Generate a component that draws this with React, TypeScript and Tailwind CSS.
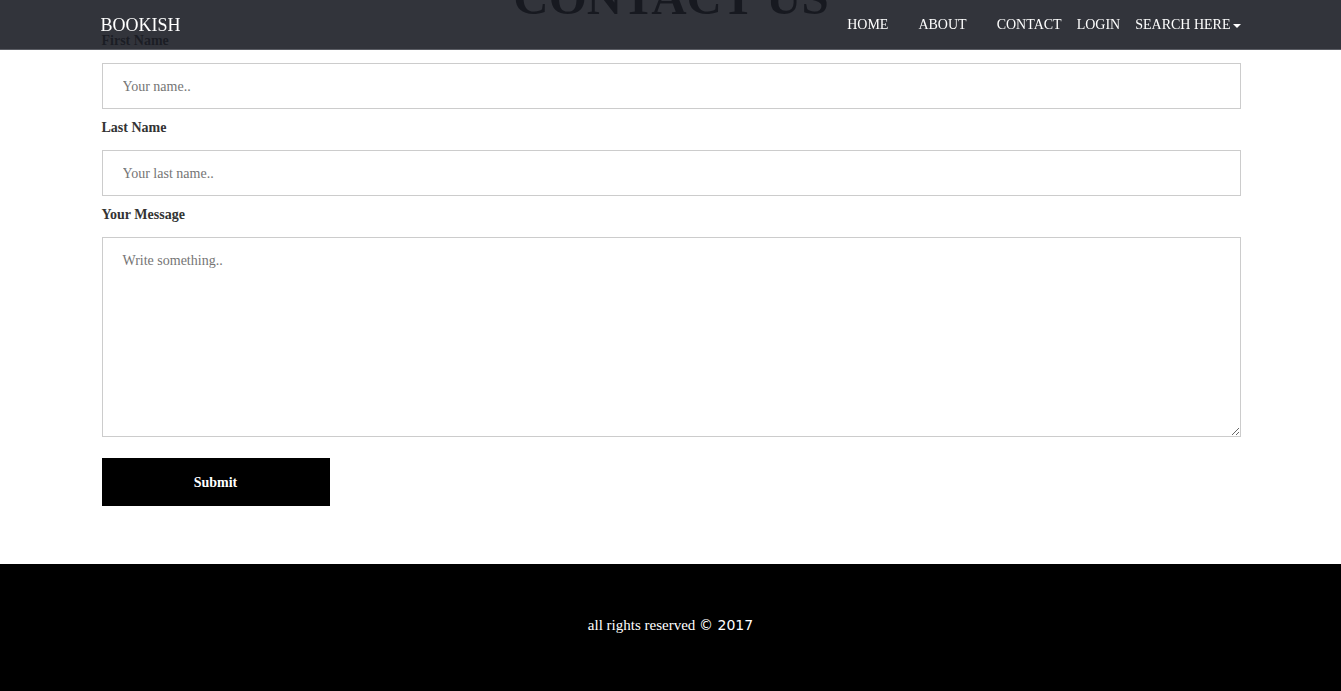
import React from "react";

const serif = { fontFamily: '"Liberation Serif", "Times New Roman", serif' };

const NavBar = () => {
  return (
    <nav className="fixed top-0 left-0 right-0 z-10 h-[50px] bg-[rgba(25,27,35,0.89)] border-b border-[#5b5d64]">
      <div className="mx-auto w-[1140px] h-[49px] flex items-center justify-between text-white">
        <a href="#" className="text-[18px] leading-none">
          BOOKISH
        </a>
        <ul className="flex items-center text-[14px] leading-none">
          <li className="mr-[30px]">HOME</li>
          <li className="mr-[30px]">ABOUT</li>
          <li className="mr-[15px]">CONTACT</li>
          <li className="mr-[15px]">LOGIN</li>
          <li className="flex items-center">
            SEARCH HERE
            <span className="ml-[2px] mt-[2px] w-0 h-0 border-l-[4px] border-r-[4px] border-t-[4px] border-l-transparent border-r-transparent border-t-white" />
          </li>
        </ul>
      </div>
    </nav>
  );
};

const Field = ({ label, placeholder }: { label: string; placeholder: string }) => (
  <div>
    <label className="block h-5 leading-5 text-[14px] font-bold text-[#333]">{label}</label>
    <input
      type="text"
      placeholder={placeholder}
      className="block w-full h-[46px] mt-[12px] mb-[9px] border border-[#ccc] pl-5 pr-5 pt-px text-[14px] placeholder:text-[#757575] outline-none"
      style={serif}
    />
  </div>
);

const App = () => {
  return (
    <div className="min-h-[691px] bg-white" style={serif}>
      <NavBar />
      <main className="mx-auto w-[1140px] pl-px -mt-[27px]">
        <h1 className="h-[50px] text-center text-[49px] leading-[50px] font-bold text-[#111]">
          CONTACT US
        </h1>
        <form className="mt-[8px]">
          <Field label="First Name" placeholder="Your name.." />
          <Field label="Last Name" placeholder="Your last name.." />
          <label className="block h-5 leading-5 text-[14px] font-bold text-[#333]">Your Message</label>
          <textarea
            placeholder="Write something.."
            className="block w-full h-[200px] mt-[12px] border border-[#ccc] px-5 pt-3 pb-3 text-[14px] placeholder:text-[#757575] outline-none"
            style={serif}
          />
          <button
            type="button"
            className="mt-[21px] w-[228px] h-[48px] bg-black text-white text-[14px] font-bold"
            style={serif}
          >
            Submit
          </button>
        </form>
      </main>
      <footer className="mt-[58px] h-[127px] bg-black flex justify-center pt-[51px] text-white text-[15px]">
        <p className="leading-5">
          all rights reserved{" "}
          <span style={{ fontFamily: '"DejaVu Sans", sans-serif' }} className="text-[14px]">
            © 2017
          </span>
        </p>
      </footer>
    </div>
  );
};

export default App;
